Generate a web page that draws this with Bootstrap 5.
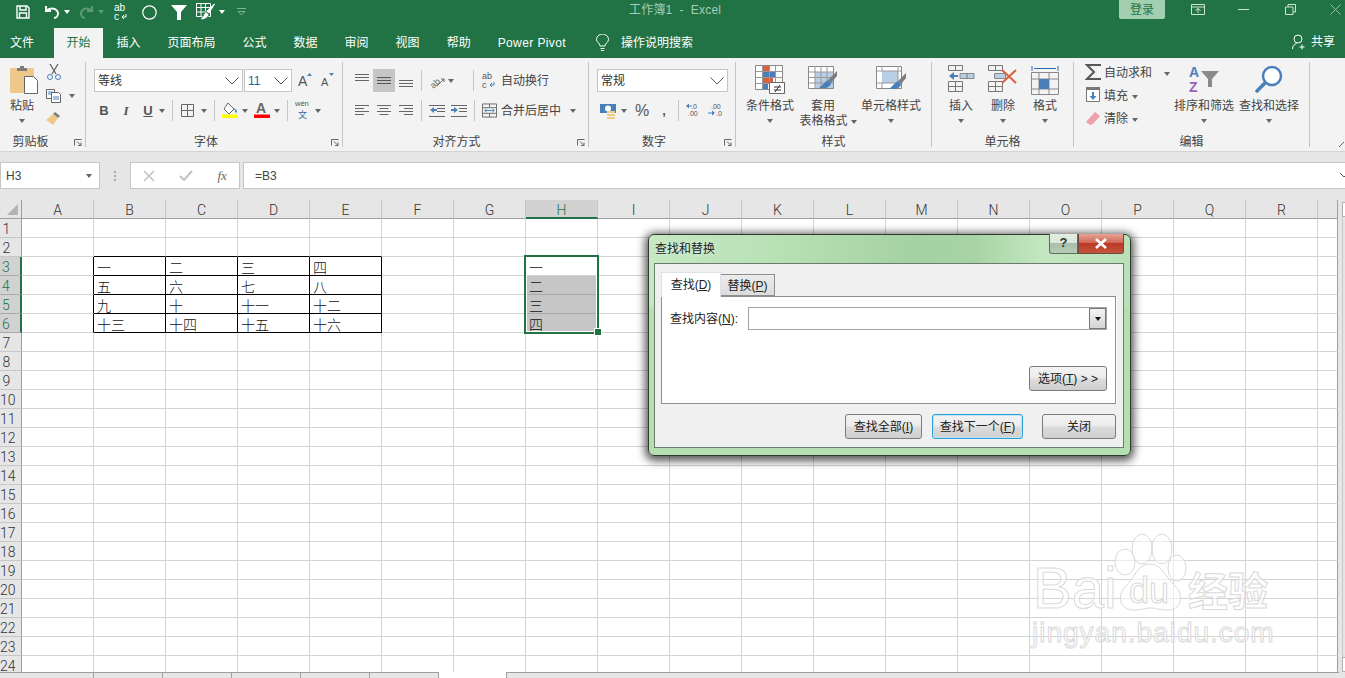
<!DOCTYPE html>
<html lang="zh-CN">
<head>
<meta charset="UTF-8">
<title>工作簿1 - Excel</title>
<link href="https://cdn.jsdelivr.net/npm/bootstrap@5.3.0/dist/css/bootstrap.min.css" rel="stylesheet">
<style>
html,body{height:678px;overflow:hidden;margin:0}
body{font:12px/15px "Liberation Sans","Noto Sans CJK SC",sans-serif;color:#444;background:#e6e6e6;position:relative}
svg{display:block;flex:none}
.titlebar{height:28px;background:#217346;color:#fff}
.qat{padding-left:16px;height:24px}
.qat .car{border-top-color:#fff}
.qat .car.dim{border-top-color:#5f9a7a}
.doc-title{position:absolute;left:629px;top:3px;color:#a8cdb6;letter-spacing:.2px}
.login{position:absolute;left:1119px;top:0;width:46px;height:19px;background:#a1cfb0;color:#217346;border-radius:0 0 2px 2px;text-align:center;line-height:20px}
.winbtn{position:absolute;top:4px}
.wb1{left:1191px}.wb2{left:1238px}.wb3{left:1285px}.wb4{left:1330px}
.tabsbar{height:30px;background:#217346}
.tabsbar .nav-link{padding:0 13.5px;height:30px;line-height:31px;color:#fff;font-size:12px;border:0}
.tabsbar .nav-link.first{padding-left:10px;padding-right:20px}
.tabsbar .nav-link.active{background:#f3f3f3;color:#217346;padding:0 12.5px;margin-right:0}
.tabsbar .nav-link.pp{padding-right:30px;letter-spacing:.4px}
.bulb{padding-top:6px}
.search{color:#fff;line-height:31px;margin-left:12px}
.share{position:absolute;left:1292px;top:6px;color:#fff;gap:5px;line-height:15px}
.ribbon{height:94px;background:#f3f3f3;border-bottom:1px solid #d4d4d4;padding-top:4px}
.grp{height:85px;border-right:1px solid #c4c4c4;position:relative}
.g1{width:86px}.g2{width:257px}.g3{width:246px}.g4{width:147px}.g5{width:196px}.g6{width:142px}.g7{width:236px}
.grp-label{position:absolute;left:0;right:0;bottom:-2px;text-align:center;line-height:14px;color:#444}
.lb1{padding-right:24px}.lb2{padding-right:16px}.lb3{padding-right:18px}
.launch{position:absolute;right:3px;bottom:1px}
.r1{height:23px;margin-top:7px}
.r2{height:23px;margin-top:7px}
.tx{padding-top:2px}
.combo{height:23px;background:#fff;border:1px solid #c6c6c6;padding-left:3px;color:#333;font-size:12px}
.combo svg{margin-left:auto;margin-right:3px}
.c-font{width:149px;margin-left:8px}.c-size{width:48px;margin-left:1px;color:#2b5f9e}.c-num{width:131px;margin-left:8px}
.car{display:inline-block;width:0;height:0;border-left:3.5px solid transparent;border-right:3.5px solid transparent;border-top:4px solid #666;flex:none}
.sep{width:1px;height:21px;background:#c6c6c6;flex:none}
.bold{font-weight:700;font-size:13px;color:#555;width:14px;text-align:center}
.ital{font:italic 700 13px "Liberation Serif",serif;color:#555;width:14px;text-align:center}
.und{font-weight:700;font-size:13px;color:#555;width:14px;text-align:center;text-decoration:underline}
.hl{width:22px;height:23px;background:#c6c6c6;flex:none}
.big{position:absolute;top:3px;display:flex;flex-direction:column;align-items:center;color:#444}
.big .ico{height:34px}
.big .car{margin-top:5px}
.big .t2{display:flex;align-items:center;gap:3px;margin-right:-10px}
.big .t2 .car{margin-top:0}
.paste-ico{margin-right:-4px}
.mini{position:absolute;display:flex;align-items:center;gap:4px;color:#444}
.col{position:absolute}
.pct{font-size:16px;color:#555;width:14px;text-align:center}
.comma{font-weight:700;font-size:13px;color:#555;width:8px;text-align:center}
.ml3{margin-left:3px}.ml4{margin-left:4px}.ml5{margin-left:5px}.ml6{margin-left:6px}.ml7{margin-left:7px}.ml8{margin-left:8px}.ml9{margin-left:9px}.ml10{margin-left:10px}.ml11{margin-left:11px}.ml12{margin-left:12px}.ml14{margin-left:14px}.ml19{margin-left:19px}
.fbar-gap{height:10px;background:#e6e6e6}
.fbar{height:28px;background:#e6e6e6;padding-bottom:1px}
.fbox{background:#fff;border:1px solid #c6c6c6;height:27px;color:#444}
.namebox{width:100px;padding:1px 7px 0 5px;font-size:12px}
.dots{width:30px;gap:2px}
.dots i{width:2px;height:2px;background:#aaa;display:block}
.funcs{width:110px;margin-right:3px}
.fx{font:italic 13px "Liberation Serif",serif;color:#666}
.finput{flex:1;padding:1px 0 0 11px;border-right:0;font-size:12px;position:relative}
.fchev{position:absolute;right:-3px;top:10px}
.sheetwrap{height:472px;background:#fff}
.sheet-main{width:1338px;position:relative;overflow:hidden}
.sheet{border-collapse:separate;border-spacing:0;table-layout:fixed;width:1338px}
.sheet th,.sheet td{height:19px;padding:0;border-right:1px solid #d4d4d4;border-bottom:1px solid #d4d4d4;font-weight:400;font-size:14px;line-height:16px;overflow:hidden;white-space:nowrap;color:#111;vertical-align:top}
.sheet td{padding-left:3px;padding-top:2px;font-family:"Noto Sans CJK SC",sans-serif;font-weight:300}
.sheet thead th{background:#e6e6e6;text-align:center;border-bottom-color:#9f9f9f;border-right-color:#c6c6c6;color:#333;font-family:Roboto,sans-serif;font-weight:300;padding-top:3px;line-height:15px}
.sheet tbody th{background:#e6e6e6;border-right-color:#9f9f9f;border-bottom-color:#c6c6c6;text-align:center;padding-right:8px;padding-top:3px;line-height:15px;color:#333;font-family:Roboto,sans-serif;font-weight:300}
.sheet th.corner{position:relative;border-right-color:#9f9f9f}
.corner svg{position:absolute;left:7px;top:4px}
.sheet thead th.on{background:#d2d2d2;color:#217346;border-bottom:2px solid #217346;line-height:14px}
.sheet tbody th.on{background:#d2d2d2;color:#217346;border-right:2px solid #217346;border-bottom-color:#aaa}
.sheet td.kr{border-right-color:#000}
.sheet td.kb{border-bottom-color:#000}
.sheet td.sel{background:#c6c6c6;border-right-color:#c6c6c6;border-bottom-color:#a8a8a8}
.sheet tr>:last-child{border-right-color:#9f9f9f}
.selbox{position:absolute;left:524px;top:55px;width:75px;height:79px;border:2px solid #217346;box-shadow:inset 0 0 0 1px #fff}
.handle{position:absolute;left:595px;top:129px;width:6px;height:6px;background:#217346;box-shadow:0 0 0 1px #fff}
.vscroll{flex:1;background:#e6e6e6;padding-left:4px}
.vs-btn{height:15px;background:#fff;border:1px solid #b0b0b0;border-right:0;flex:none}
.vs-btn.up{margin-top:2px}
.vs-track{flex:1;border-left:1px solid #c6c6c6}
.hbar{height:6px;background:#fff;position:relative}
.sheettabs{width:439px;height:6px;background:#e6e6e6;border-top:1px solid #9f9f9f;border-right:1px solid #9f9f9f}
.sheettabs i{display:block;height:5px;width:69px;border-right:1px solid #9f9f9f}
.sheettabs i:first-child{width:94px}
.hscroll{margin-left:67px;width:833px;height:6px;background:#e6e6e6;border-top:1px solid #9f9f9f;border-left:1px solid #9f9f9f}
.hrest{flex:1;background:#e6e6e6}
.dlg{position:absolute;left:648px;top:234px;width:483px;height:222px;border:1px solid #2e3a2e;border-radius:6px;box-shadow:0 2px 9px 3px rgba(0,0,0,.65);background:linear-gradient(#0000 32%,#b4e0b1 34%),linear-gradient(90deg,#c6e8c3 0,#b9e1b6 25%,#a5d2a2 55%,#a8d4a5 68%,#c4e7c1 82%,#b9e1b6 100%);padding:28px 6px 7px 5px;color:#222}
.dlg-title{position:absolute;left:6px;top:7px;color:#222;text-shadow:0 0 4px #e6f5e4}
.dlg-help{position:absolute;left:400px;top:-1px;width:29px;height:20px;border:1px solid #55705a;border-top:0;border-radius:0 0 0 3px;background:linear-gradient(#e2eee2 0,#dde7dd 45%,#a9bfa9 50%,#b8cbb8);text-align:center;font-weight:700;font-size:13px;line-height:18px;color:#333}
.dlg-close{position:absolute;left:429px;top:-1px;width:46px;height:20px;border:1px solid #6d4a40;border-top:0;border-radius:0 0 3px 0;background:linear-gradient(#e8a294 0,#d2685a 45%,#bb3a26 50%,#c5543e);display:flex;align-items:center;justify-content:center}
.panel{height:185px;background:#f0f0f0;border:1px solid #6c7c6c;padding:8px 7px 0 6px}
.panel .nav-tabs{border:0;height:25px;position:relative;z-index:1}
.panel .nav-link{padding:0;font-size:12px;color:#222;border:1px solid #8e8e8e;border-radius:0;text-align:center}
.panel .nav-link.active{background:#fff;width:60px;height:25px;border-bottom:0;line-height:24px;color:#222}
.panel .nav-link.other{background:linear-gradient(#ececec,#dcdcdc);width:54px;height:22px;margin-top:2px;border-left:0;line-height:22px}
.findbox{height:108px;margin-top:-1px;background:#fff;border:1px solid #8e8e8e;padding:10px 8px 0 8px;box-shadow:1px 0 0 #fff}
.findlabel{width:78px;padding-top:1px}
.findinput{flex:1;height:23px;border:1px solid #a3a3a3;border-radius:0;background:#fff;padding:0;position:relative}
.ddbtn{position:absolute;right:0;top:0;width:17px;height:21px;border:1px solid #777;background:linear-gradient(#f4f4f4,#d4d4d4);display:flex;align-items:center;justify-content:center}
.ddbtn .car{border-top-color:#111}
.wbtn{height:25px;padding:0;border:1px solid #7b7b7b;border-radius:3px;background:linear-gradient(#f3f3f3 0,#ebebeb 48%,#dcdcdc 52%,#cfcfcf 100%);font-size:12px;line-height:22px;color:#222}
.wbtn.opt{width:78px}
.optrow{margin-top:36px}
.btnrow{margin-top:10px}
.b-all{width:77px;margin-right:10px}
.b-next{width:91px;margin-right:19px;border:1px solid #2ba0d8;box-shadow:inset 0 0 0 1px #bfe6f7}
.b-close{width:74px}
.wm{position:absolute;left:1030px;top:530px;pointer-events:none}
</style>
</head>
<body>
<!-- title bar -->
<div class="titlebar position-relative">
  <div class="qat d-flex align-items-center">
    <svg width="14" height="14" viewBox="0 0 14 14" fill="none" stroke="#fff" stroke-width="1.4"><path d="M1 1h10l2 2v10H1z"/><path d="M4 1v4h6V1M3.500 13V8h7v5"/></svg>
    <svg class="ml14" width="16" height="14" viewBox="0 0 16 14" fill="none" stroke="#fff" stroke-width="2"><path d="M2 1v5h5"/><path d="M2 6c4-4 11-3 12 2 .4 3-2 5-4 5"/></svg>
    <span class="car ml4"></span>
    <svg class="ml9" width="15" height="14" viewBox="0 0 15 14" fill="none" stroke="#5f9a7a" stroke-width="2"><path d="M13 1v5H8"/><path d="M13 6C9 2 3 3 2 8c-.4 3 2 5 4 5"/></svg>
    <span class="car dim ml4"></span>
    <svg class="ml10" width="14" height="20" viewBox="0 0 14 20"><text x="0" y="9" font-size="10" fill="#fff" font-family="Liberation Sans">ab</text><text x="0" y="18" font-size="10" fill="#fff" font-family="Liberation Sans">c</text><path d="M12 12v3H8m2-2-2 2 2 2" fill="none" stroke="#fff"/></svg>
    <svg class="ml14" width="15" height="15" viewBox="0 0 15 15" fill="none" stroke="#fff" stroke-width="1.2"><circle cx="7.500" cy="7.500" r="6.700"/></svg>
    <svg class="ml14" width="16" height="15" viewBox="0 0 16 15" fill="#fff"><path d="M0 0h16L10 7v8H6V7z"/></svg>
    <svg class="ml9" width="19" height="18" viewBox="0 0 19 18" fill="none" stroke="#fff"><path d="M.5.500h14v13H.5zM.5 4.500h14M.5 9h14M5 .5v13M9.500 .5v13"/><path d="M18.500 1 11 8l2 2z" fill="#fff"/><path d="M10 8.500c-2 1-2 4-6 8 3 1 8-1 9-5z" fill="#fff" stroke="#217346"/></svg>
    <span class="car ml4"></span>
    <svg class="ml12" width="9" height="8" viewBox="0 0 9 8" fill="none" stroke="#7fb296"><path d="M0 .5h9M1 3.500h7L4.500 7z"/></svg>
  </div>
  <span class="doc-title">工作簿1&nbsp; -&nbsp; Excel</span>
  <span class="login">登录</span>
  <svg class="winbtn wb1" width="14" height="11" viewBox="0 0 14 11" fill="none" stroke="#cfe3d6"><path d="M.5.500h13v10H.5zM.5 3h13M7 9V4.500M4.500 6.500 7 4.500l2.500 2"/></svg>
  <svg class="winbtn wb2" width="11" height="11" viewBox="0 0 11 11" stroke="#cfe3d6"><path d="M0 5.500h11"/></svg>
  <svg class="winbtn wb3" width="11" height="11" viewBox="0 0 11 11" fill="none" stroke="#cfe3d6"><path d="M.5 3h7.500v7.500H.5zM3 3V.5h7.500V8H8"/></svg>
  <svg class="winbtn wb4" width="11" height="11" viewBox="0 0 11 11" stroke="#8fbfa3"><path d="M.5.500l10 10M10.500.500l-10 10"/></svg>
</div>
<!-- ribbon tabs -->
<div class="tabsbar d-flex position-relative">
  <ul class="nav">
    <li class="nav-item"><a class="nav-link first" href="#">文件</a></li>
    <li class="nav-item"><a class="nav-link active" href="#">开始</a></li>
    <li class="nav-item"><a class="nav-link" href="#">插入</a></li>
    <li class="nav-item"><a class="nav-link" href="#">页面布局</a></li>
    <li class="nav-item"><a class="nav-link" href="#">公式</a></li>
    <li class="nav-item"><a class="nav-link" href="#">数据</a></li>
    <li class="nav-item"><a class="nav-link" href="#">审阅</a></li>
    <li class="nav-item"><a class="nav-link" href="#">视图</a></li>
    <li class="nav-item"><a class="nav-link" href="#">帮助</a></li>
    <li class="nav-item"><a class="nav-link pp" href="#">Power Pivot</a></li>
  </ul>
  <div class="bulb"><svg width="13" height="18" viewBox="0 0 13 18" fill="none" stroke="#fff"><path d="M4 12c0-3-3.500-3.500-3.500-6.500a6 5.500 0 0 1 12 0C12.500 8.500 9 9 9 12zM4.500 14.500h4M5 16.500h3"/></svg></div>
  <span class="search">操作说明搜索</span>
  <div class="share d-flex align-items-center"><svg width="14" height="16" viewBox="0 0 14 16" fill="none" stroke="#fff"><circle cx="6" cy="5" r="4"/><path d="M.5 15c0-3 2-5 4-5.500M10 10.500v5M7.500 13h5"/></svg><span>共享</span></div>
</div>
<!-- ribbon -->
<div class="ribbon d-flex">
  <section class="grp g1">
    <div class="big" style="left:10px">
      <div class="ico"><svg class="paste-ico" width="28" height="30" viewBox="0 0 28 30"><path d="M1 3h23v25H1a1 1 0 0 1-1-1V4a1 1 0 0 1 1-1z" fill="#eec98a"/><path d="M7 3h3V1h4v2h3v3H7z" fill="#7d7d7d"/><path d="M14.500 11.500h9l4 4v13h-13z" fill="#fff" stroke="#666"/></svg></div>
      <span>粘贴</span><span class="car"></span>
    </div>
    <svg class="col" style="left:47px;top:2px" width="14" height="16" viewBox="0 0 14 16" fill="none" stroke="#666"><path d="M3 0l6 10M11 0L5 10" stroke-width="1.300"/><circle cx="3" cy="13" r="2.500" stroke="#4a80b9"/><circle cx="11" cy="13" r="2.500" stroke="#4a80b9"/></svg>
    <div class="mini" style="left:46px;top:27px"><svg width="16" height="14" viewBox="0 0 16 14" fill="#fff" stroke="#666"><path d="M.5.500h8v9h-8z"/><path d="M5.500 3.500h7l2 2v8h-9z"/><path d="M2 3h5M2 5h3" stroke="#4a80b9"/><path d="M7 8h6M7 10h6" stroke="#4a80b9"/></svg><span class="car ml3"></span></div>
    <svg class="col" style="left:46px;top:49px" width="16" height="14" viewBox="0 0 16 14"><path d="M9 1l5 4-2 2-5-4z" fill="#7d7d7d"/><path d="M7 3l5 4-5 7-7-5z" fill="#eec98a"/></svg>
    <div class="grp-label lb1">剪贴板</div>
    <svg class="launch" width="8" height="7" viewBox="0 0 8 7" fill="none" stroke="#666"><path d="M.5 6.500v-6h7"/><path d="M3 2.500l4 4M7 3.500v3H4"/></svg>
  </section>
  <section class="grp g2">
    <div class="r1 d-flex align-items-center">
      <div class="combo c-font d-flex align-items-center"><span class="tx">等线</span><svg width="14" height="8" viewBox="0 0 14 8" fill="none" stroke="#555"><path d="M.5.500 7 7 13.500.500"/></svg></div>
      <div class="combo c-size d-flex align-items-center"><span class="tx">11</span><svg width="14" height="8" viewBox="0 0 14 8" fill="none" stroke="#555"><path d="M.5.500 7 7 13.500.500"/></svg></div>
      <svg class="ml6" width="14" height="18" viewBox="0 0 14 18"><text x="0" y="14" font-size="14" fill="#555" font-family="Liberation Sans">A</text><path d="M9 4h5l-2.500-3z" fill="#4a80b9"/></svg>
      <svg class="ml9" width="13" height="18" viewBox="0 0 13 18"><text x="0" y="14" font-size="11" fill="#555" font-family="Liberation Sans">A</text><path d="M8 1h5l-2.500 3z" fill="#4a80b9"/></svg>
    </div>
    <div class="r2 d-flex align-items-center">
      <span class="bold ml11">B</span><span class="ital ml8">I</span><span class="und ml8">U</span><span class="car ml4"></span>
      <span class="sep ml7"></span>
      <svg class="ml8" width="13" height="13" viewBox="0 0 13 13" fill="none" stroke="#666"><path d="M.5.500h12v12H.5zM6.500.500v12M.5 6.500h12"/></svg>
      <span class="car ml7"></span>
      <span class="sep ml7"></span>
      <svg class="ml7" width="16" height="17" viewBox="0 0 16 17"><path d="M6 1l6 6-5 5-5-5z" fill="#fff" stroke="#666"/><path d="M12 6c2 1 3 3 3 4s-2 1-2-1z" fill="#4a80b9"/><path d="M0 12.500h16V16H0z" fill="#ff0"/></svg>
      <span class="car ml4"></span>
      <svg class="ml6" width="16" height="17" viewBox="0 0 16 17"><text x="2" y="11" font-size="14" font-weight="700" fill="#666" font-family="Liberation Sans">A</text><path d="M0 12.500h16V16H0z" fill="#f00"/></svg>
      <span class="car ml4"></span>
      <span class="sep ml7"></span>
      <svg class="ml7" width="16" height="21" viewBox="0 0 16 21"><text x="0" y="6" font-size="7.500" fill="#555" font-family="Liberation Sans">wén</text><text x="3" y="18" font-size="9" fill="#2f6bb0" font-family="Noto Sans CJK SC">文</text></svg>
      <span class="car ml4"></span>
    </div>
    <div class="grp-label lb2">字体</div>
    <svg class="launch" width="8" height="7" viewBox="0 0 8 7" fill="none" stroke="#666"><path d="M.5 6.500v-6h7"/><path d="M3 2.500l4 4M7 3.500v3H4"/></svg>
  </section>
  <section class="grp g3">
    <div class="r1 d-flex align-items-center">
      <svg class="ml12" width="14" height="16" viewBox="0 0 14 16" stroke="#666"><path d="M0 1.500h14M0 4.500h14M0 7.500h14"/></svg>
      <div class="hl ml4 d-flex align-items-center justify-content-center"><svg width="14" height="8" viewBox="0 0 14 8" stroke="#555"><path d="M0 .5h14M0 3.500h14M0 6.500h14"/></svg></div>
      <svg class="ml4" width="14" height="16" viewBox="0 0 14 16" stroke="#666"><path d="M0 7.500h14M0 10.500h14M0 13.500h14"/></svg>
      <span class="sep ml8"></span>
      <svg class="ml7" width="16" height="18" viewBox="0 0 16 18"><text x="0" y="14" font-size="9" fill="#666" transform="rotate(-45 6 10)" font-family="Liberation Sans">ab</text><path d="M8 14l7-7M15 7v3M15 7h-3" stroke="#666" fill="none"/></svg>
      <span class="car ml3"></span>
      <span class="sep ml19"></span>
      <svg class="ml8" width="14" height="19" viewBox="0 0 14 19"><text x="0" y="8" font-size="9" fill="#555" font-family="Liberation Sans">ab</text><text x="0" y="17" font-size="9" fill="#555" font-family="Liberation Sans">c</text><path d="M12 11v3H8m2-2-2 2 2 2" fill="none" stroke="#4a80b9"/></svg>
      <span class="ml5 tx">自动换行</span>
    </div>
    <div class="r2 d-flex align-items-center">
      <svg class="ml12" width="14" height="11" viewBox="0 0 14 11" stroke="#666"><path d="M0 .5h14M0 3.500h9M0 6.500h14M0 9.500h9"/></svg>
      <svg class="ml8" width="14" height="11" viewBox="0 0 14 11" stroke="#666"><path d="M0 .5h14M2.500 3.500h9M0 6.500h14M2.500 9.500h9"/></svg>
      <svg class="ml8" width="14" height="11" viewBox="0 0 14 11" stroke="#666"><path d="M0 .5h14M5 3.500h9M0 6.500h14M5 9.500h9"/></svg>
      <span class="sep ml8"></span>
      <svg class="ml7" width="16" height="12" viewBox="0 0 16 12"><path d="M0 .5h16M8 3.500h8M8 6.500h8M0 11.500h16" stroke="#666"/><path d="M1 5l4-3v2h3v2H5v2z" fill="#4a80b9"/></svg>
      <svg class="ml6" width="16" height="12" viewBox="0 0 16 12"><path d="M0 .5h16M8 3.500h8M8 6.500h8M0 11.500h16" stroke="#666"/><path d="M7 5L3 2v2H0v2h3v2z" fill="#4a80b9"/></svg>
      <span class="sep ml7"></span>
      <svg class="ml7" width="15" height="15" viewBox="0 0 16 15" fill="none" stroke="#666"><path d="M.5.500h15v14H.5zM.5 4.500h15M.5 10.500h15M8 .5v4M8 10.500v4"/><path d="M3 7.500h10M5 5.500l-2 2 2 2M11 5.500l2 2-2 2" stroke="#4a80b9"/></svg>
      <span class="ml4 tx">合并后居中</span><span class="car ml9"></span>
    </div>
    <div class="grp-label lb3">对齐方式</div>
    <svg class="launch" width="8" height="7" viewBox="0 0 8 7" fill="none" stroke="#666"><path d="M.5 6.500v-6h7"/><path d="M3 2.500l4 4M7 3.500v3H4"/></svg>
  </section>
  <section class="grp g4">
    <div class="r1 d-flex align-items-center">
      <div class="combo c-num d-flex align-items-center"><span class="tx">常规</span><svg width="14" height="8" viewBox="0 0 14 8" fill="none" stroke="#555"><path d="M.5.500 7 7 13.500.500"/></svg></div>
    </div>
    <div class="r2 d-flex align-items-center">
      <svg class="ml11" width="16" height="16" viewBox="0 0 16 16"><path d="M0 1h16v9H0z" fill="#4a80b9"/><circle cx="8" cy="5.500" r="3" fill="#fff"/><path d="M7 8h8v2H7zM7 11h8v2H7zM7 14h8v2H7z" fill="#eec98a"/></svg>
      <span class="car ml5"></span>
      <span class="pct ml8">%</span>
      <span class="comma ml11">,</span>
      <span class="sep ml10"></span>
      <svg class="ml7" width="15" height="15" viewBox="0 0 15 15"><text x="5" y="6" font-size="7" fill="#555" font-family="Liberation Sans">.0</text><text x="2" y="13" font-size="7" fill="#555" font-family="Liberation Sans">.00</text><path d="M0 3l3-2.500v2h3v1H3v2z" fill="#4a80b9"/></svg>
      <svg class="ml7" width="15" height="15" viewBox="0 0 15 15"><text x="3" y="6" font-size="7" fill="#555" font-family="Liberation Sans">.00</text><text x="8" y="13" font-size="7" fill="#555" font-family="Liberation Sans">.0</text><path d="M7 10L4 7.500v2H0v1h4v2z" fill="#4a80b9"/></svg>
    </div>
    <div class="grp-label lb2">数字</div>
    <svg class="launch" width="8" height="7" viewBox="0 0 8 7" fill="none" stroke="#666"><path d="M.5 6.500v-6h7"/><path d="M3 2.500l4 4M7 3.500v3H4"/></svg>
  </section>
  <section class="grp g5">
    <div class="big" style="left:10px;width:48px">
      <div class="ico"><svg width="30" height="29" viewBox="0 0 30 29"><path d="M.5.500h27v24H.5z" fill="#fff" stroke="#888"/><path d="M8 1h6v5H8z" fill="#d9603f"/><path d="M8 7h12v5H8z" fill="#4a80b9"/><path d="M8 13h10v5H8z" fill="#d9603f"/><path d="M8 19h5v5H8z" fill="#4a80b9"/><path d="M7.500 1v24M14.500 1v24M20.500 1v24M1 6.500h26M1 12.500h26M1 18.500h26" stroke="#999" fill="none"/><path d="M14.500 17.500h15v11h-15z" fill="#fff" stroke="#666"/><path d="M19 22h7M19 25h7M25 20l-5 7" stroke="#333" fill="none"/></svg></div>
      <span>条件格式</span><span class="car"></span>
    </div>
    <div class="big" style="left:63px;width:48px">
      <div class="ico"><svg width="30" height="30" viewBox="0 0 30 30"><path d="M.5 1.500h25v22H.5z" fill="#fff" stroke="#888"/><path d="M7 7h18v16H7z" fill="#b9cfe6"/><path d="M7 1v22M13 1v22M19 1v22M1 7h24M1 12.500h24M1 18h24" stroke="#999" fill="none"/><path d="M29 6l-9 9 3 3 6-7z" fill="#7d7d7d"/><path d="M20 15c-4 2-5 5-9 8h7c3-1 5-3 5-5z" fill="#4a80b9"/></svg></div>
      <span>套用</span><span class="t2">表格格式<span class="car"></span></span>
    </div>
    <div class="big" style="left:125px;width:60px">
      <div class="ico"><svg width="31" height="30" viewBox="0 0 31 30"><path d="M.5 1.500h25v22H.5z" fill="#fff" stroke="#888"/><path d="M6 6h16v12H6z" fill="#b9cfe6"/><path d="M6 1v5M1 6h24M1 18h24M6 18v5M22 1v22" stroke="#999" fill="none"/><path d="M30 8l-8 8 3 3 5-6z" fill="#7d7d7d"/><path d="M22 16c-4 2-5 5-9 8h7c3-1 5-3 5-5z" fill="#4a80b9"/></svg></div>
      <span>单元格样式</span><span class="car"></span>
    </div>
    <div class="grp-label">样式</div>
  </section>
  <section class="grp g6">
    <div class="big" style="left:17px;width:24px">
      <div class="ico"><svg width="27" height="28" viewBox="0 0 27 28" fill="none" stroke="#777"><path d="M.5.500h14v5H.5zM7.500.500v5M.5 16.500h14v10H.5zM7.500 16.500v10M.5 21.500h14"/><path d="M12 8.500h14v5H12z" fill="#b9cfe6" stroke="#888"/><path d="M19 8.500v5"/><path d="M1 11l5-4v3h4v2H6v3z" fill="#4a80b9" stroke="none"/></svg></div>
      <span>插入</span><span class="car"></span>
    </div>
    <div class="big" style="left:59px;width:24px">
      <div class="ico"><svg width="30" height="28" viewBox="0 0 30 28" fill="none" stroke="#777"><path d="M.5.500h14v5H.5zM7.500.500v5M.5 16.500h14v10H.5zM7.500 16.500v10M.5 21.500h14"/><path d="M6.500 8.500h11v5h-11z" fill="#b9cfe6" stroke="#888"/><path d="M14 5l14 13M28 5L14 18" stroke="#d9603f" stroke-width="2"/></svg></div>
      <span>删除</span><span class="car"></span>
    </div>
    <div class="big" style="left:101px;width:24px">
      <div class="ico"><svg width="28" height="30" viewBox="0 0 28 30" fill="none" stroke="#888"><path d="M1 1v5M27 1v5M3 3.500h22" stroke="#2f6bb0"/><path d="M.5 7.500h27v22H.5z"/><path d="M8 7.500V29M18 7.500V29M.5 14h27M.5 24h27"/><path d="M8 14h10v10H8z" fill="#4a80b9" stroke="none"/></svg></div>
      <span>格式</span><span class="car"></span>
    </div>
    <div class="grp-label">单元格</div>
  </section>
  <section class="grp g7">
    <svg class="col" style="left:11px;top:2px" width="16" height="16" viewBox="0 0 16 16" fill="none" stroke="#555" stroke-width="2"><path d="M16 1H2l7 7-7 7h14"/></svg>
    <div class="mini" style="left:30px;top:4px"><span>自动求和</span><span class="car ml8"></span></div>
    <svg class="col" style="left:12px;top:25px" width="14" height="15" viewBox="0 0 14 15"><path d="M.5.500h13v14H.5z" fill="#fff" stroke="#777"/><path d="M0 0h14v3H0z" fill="#777"/><path d="M6 5h2v4h2.500L7 13 3.500 9H6z" fill="#4a80b9"/></svg>
    <div class="mini" style="left:30px;top:27px"><span>填充</span><span class="car"></span></div>
    <svg class="col" style="left:12px;top:50px" width="14" height="13" viewBox="0 0 14 13"><path d="M9 0l5 4-7 8-3 1-4-3z" fill="#f0a0ac"/></svg>
    <div class="mini" style="left:30px;top:50px"><span>清除</span><span class="car"></span></div>
    <div class="big" style="left:100px;width:60px">
      <div class="ico"><svg width="30" height="32" viewBox="0 0 30 32"><text x="0" y="12" font-size="14" font-weight="700" fill="#4a80b9" font-family="Liberation Sans">A</text><text x="0" y="27" font-size="14" font-weight="700" fill="#9a5fb8" font-family="Liberation Sans">Z</text><path d="M12 6h18l-7 8v8h-4v-8z" fill="#8a8a8a"/></svg></div>
      <span>排序和筛选</span><span class="car"></span>
    </div>
    <div class="big" style="left:165px;width:60px">
      <div class="ico"><svg width="28" height="29" viewBox="0 0 28 29" fill="none" stroke="#4a80b9"><circle cx="17" cy="11" r="9" stroke-width="2.500" fill="#fff"/><path d="M10 18L2 26" stroke-width="3.500" stroke-linecap="round"/></svg></div>
      <span>查找和选择</span><span class="car"></span>
    </div>
    <div class="grp-label">编辑</div>
  </section>
  <svg class="align-self-end ms-auto mb-1" width="6" height="6" viewBox="0 0 6 6" stroke="#666" fill="none"><path d="M0 6l5-5"/></svg>
</div>
<div class="fbar-gap"></div>
<!-- formula bar -->
<div class="fbar d-flex">
  <div class="fbox namebox d-flex align-items-center justify-content-between"><span>H3</span><span class="car"></span></div>
  <div class="dots d-flex flex-column align-items-center justify-content-center"><i></i><i></i><i></i></div>
  <div class="fbox funcs d-flex align-items-center justify-content-around">
    <svg width="12" height="12" viewBox="0 0 12 12" stroke="#c2c2c2" stroke-width="1.600"><path d="M1 1l10 10M11 1L1 11"/></svg>
    <svg width="14" height="11" viewBox="0 0 14 11" fill="none" stroke="#c2c2c2" stroke-width="2"><path d="M1 6l4 4 8-9"/></svg>
    <span class="fx">fx</span>
  </div>
  <div class="fbox finput d-flex align-items-center">=B3<svg class="fchev" width="8" height="5" viewBox="0 0 8 5" fill="none" stroke="#555"><path d="M0 0l4 4 4-4"/></svg></div>
</div>
<div class="fbar-gap"></div>
<!-- sheet -->
<div class="sheetwrap d-flex">
  <div class="sheet-main">
    <table class="sheet" id="sheet"></table>
    <div class="selbox"></div>
    <div class="handle"></div>
  </div>
  <div class="vscroll d-flex flex-column"><div class="vs-btn up"></div><div class="vs-track"></div><div class="vs-btn"></div></div>
</div>
<div class="hbar d-flex">
  <div class="sheettabs d-flex"><i></i><i></i><i></i><i></i><i></i></div>
  <div class="hscroll"></div>
  <div class="hrest"></div>
</div>
<!-- watermark -->
<svg class="wm" width="250" height="125" viewBox="0 0 250 125" fill="rgba(255,255,255,.55)" stroke="#d9d9d9" stroke-width="1">
  <text x="3" y="78" font-size="58" font-family="Liberation Sans">Bai</text>
  <ellipse cx="95" cy="32" rx="10" ry="13"/><ellipse cx="112" cy="19" rx="10" ry="15"/><ellipse cx="132" cy="19" rx="10" ry="15"/><ellipse cx="147" cy="38" rx="9" ry="13"/>
  <path d="M120 34C108 34 104 48 96 56 86 66 90 80 104 80 112 80 114 78 120 78 126 78 130 80 138 80 152 80 154 64 145 56 136 48 132 34 120 34Z"/>
  <text x="99" y="73" font-size="36" font-family="Liberation Sans">du</text>
  <text x="158" y="76" font-size="40" font-family="Noto Sans CJK SC" font-weight="700">经验</text>
  <text x="2" y="112" font-size="28" letter-spacing="1" font-family="Liberation Sans">jingyan.baidu.com</text>
</svg>
<!-- find and replace dialog -->
<div class="dlg">
  <div class="dlg-title">查找和替换</div>
  <div class="dlg-help">?</div>
  <div class="dlg-close"><svg width="14" height="11" viewBox="0 0 14 11" stroke="#fff" stroke-width="2.600"><path d="M2 1l10 9M12 1L2 10"/></svg></div>
  <div class="panel">
    <ul class="nav nav-tabs">
      <li class="nav-item"><a class="nav-link active" href="#">查找(<u>D</u>)</a></li>
      <li class="nav-item"><a class="nav-link other" href="#">替换(<u>P</u>)</a></li>
    </ul>
    <div class="findbox">
      <div class="d-flex align-items-center">
        <label class="findlabel">查找内容(<u>N</u>):</label>
        <div class="findinput"><span class="ddbtn"><span class="car"></span></span></div>
      </div>
      <div class="optrow d-flex justify-content-end"><button type="button" class="btn wbtn opt">选项(<u>T</u>) &gt; &gt;</button></div>
    </div>
    <div class="btnrow d-flex justify-content-end">
      <button type="button" class="btn wbtn b-all">查找全部(<u>I</u>)</button>
      <button type="button" class="btn wbtn b-next">查找下一个(<u>F</u>)</button>
      <button type="button" class="btn wbtn b-close">关闭</button>
    </div>
  </div>
</div>
<script src="https://cdn.jsdelivr.net/npm/bootstrap@5.3.0/dist/js/bootstrap.bundle.min.js"></script>
<script>
// build the grid
const cols = "ABCDEFGHIJKLMNOPQR".split("");
const table = {
  3: ["一", "二", "三", "四"],
  4: ["五", "六", "七", "八"],
  5: ["九", "十", "十一", "十二"],
  6: ["十三", "十四", "十五", "十六"]
};
const hCol = { 3: "一", 4: "二", 5: "三", 6: "四" };

let html = '<colgroup><col style="width:22px">' + cols.map(() => '<col style="width:72px">').join("") + '<col style="width:20px"></colgroup>';
html += '<thead><tr><th class="corner"><svg width="11" height="11" viewBox="0 0 11 11"><path d="M11 0v11H0z" fill="#b4b4b4"/></svg></th>';
html += cols.map(c => `<th class="${c === "H" ? "on" : ""}">${c}</th>`).join("") + "<th></th></tr></thead><tbody>";
for (let r = 1; r <= 24; r++) {
  const on = r >= 3 && r <= 6;
  html += `<tr><th class="${on ? "on" : ""}">${r}</th>`;
  cols.forEach((c, i) => {
    let cls = [], text = "";
    if (on && i >= 1 && i <= 4) { text = table[r][i - 1]; cls.push("kr", "kb"); }
    if (on && i === 0) cls.push("kr");
    if (r === 2 && i >= 1 && i <= 4) cls.push("kb");
    if (on && c === "H") { text = hCol[r]; if (r > 3) cls.push("sel"); }
    html += `<td class="${cls.join(" ")}">${text}</td>`;
  });
  html += "<td></td></tr>";
}
document.getElementById("sheet").innerHTML = html + "</tbody>";
</script>
</body>
</html>
